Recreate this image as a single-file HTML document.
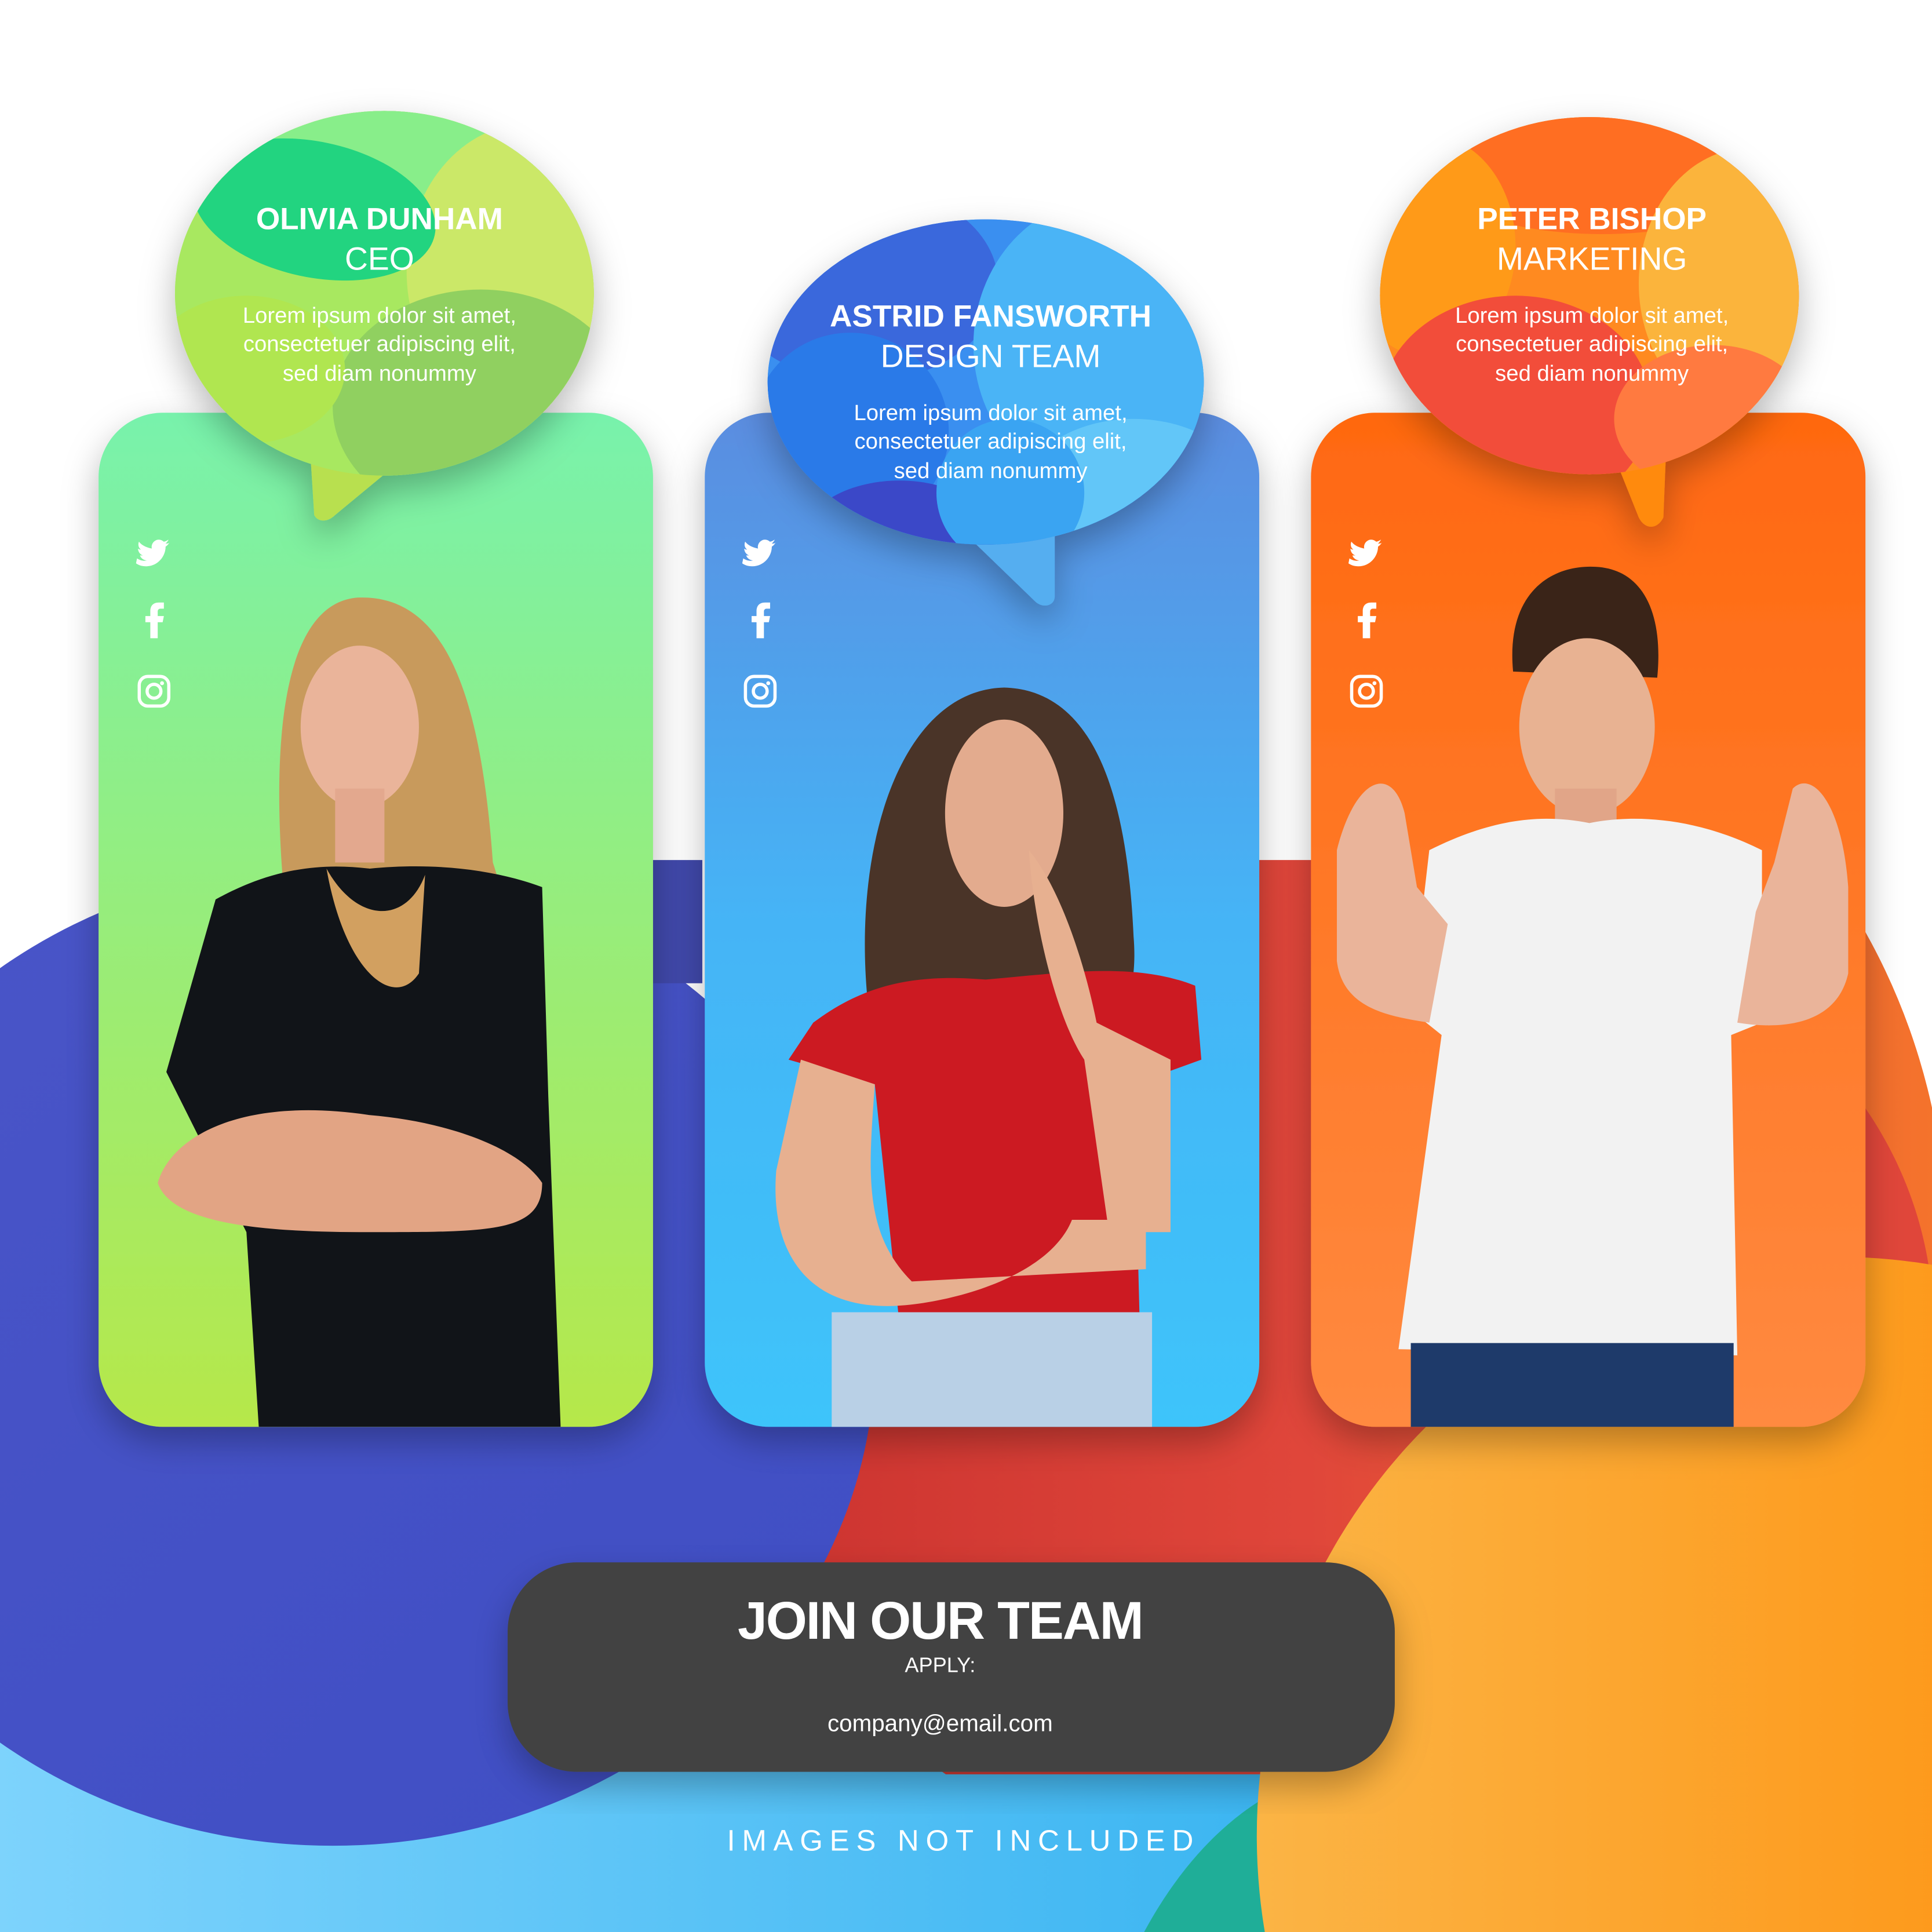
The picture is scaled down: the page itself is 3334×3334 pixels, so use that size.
<!DOCTYPE html>
<html><head><meta charset="utf-8">
<style>
html,body{margin:0;padding:0;background:#fff;width:3334px;height:3334px;overflow:hidden;}
svg{display:block;}
text{font-family:"Liberation Sans","DejaVu Sans",sans-serif;}
</style></head>
<body>
<svg width="3334" height="3334" viewBox="0 0 1568 1568" xmlns="http://www.w3.org/2000/svg">
<defs>
<linearGradient id="lb" x1="0" x2="1"><stop offset="0" stop-color="#7dd3fc"/><stop offset="1" stop-color="#1aa6ec"/></linearGradient>
<linearGradient id="red" x1="0" x2="1"><stop offset="0" stop-color="#c8302e"/><stop offset="0.5" stop-color="#e0463a"/><stop offset="1" stop-color="#f5742c"/></linearGradient>
<linearGradient id="blu" x1="0" x2="1" y1="0" y2="1"><stop offset="0" stop-color="#4a55c8"/><stop offset="1" stop-color="#3f4ec4"/></linearGradient>
<linearGradient id="org" x1="0" x2="1"><stop offset="0" stop-color="#fbb445"/><stop offset="1" stop-color="#ff8800"/></linearGradient>
<linearGradient id="cg" x1="0" x2="0" y1="0" y2="1"><stop offset="0" stop-color="#78f2ac"/><stop offset="1" stop-color="#b6e84a"/></linearGradient>
<linearGradient id="cb" x1="0" x2="0" y1="0" y2="1"><stop offset="0" stop-color="#5b8de0"/><stop offset="0.5" stop-color="#45b4f6"/><stop offset="1" stop-color="#3ec4fa"/></linearGradient>
<linearGradient id="co" x1="0" x2="0" y1="0" y2="1"><stop offset="0" stop-color="#ff6810"/><stop offset="1" stop-color="#ff8a40"/></linearGradient>
<filter id="sh" x="-20%" y="-20%" width="140%" height="140%"><feDropShadow dx="0" dy="12" stdDeviation="14" flood-color="#000" flood-opacity="0.28"/></filter>
<clipPath id="top698"><rect x="0" y="698" width="1568" height="742"/></clipPath>
<clipPath id="bg1"><ellipse cx="312" cy="238" rx="170" ry="148"/></clipPath>
<clipPath id="bb1"><ellipse cx="800" cy="310" rx="177" ry="132"/></clipPath>
<clipPath id="bo1"><ellipse cx="1290" cy="240" rx="170" ry="145"/></clipPath>
<clipPath id="k1"><rect x="80" y="335" width="450" height="823" rx="52"/></clipPath>
<clipPath id="k2"><rect x="572" y="335" width="450" height="823" rx="52"/></clipPath>
<clipPath id="k3"><rect x="1064" y="335" width="450" height="823" rx="52"/></clipPath>
<g id="icons" fill="#fff">
  <path d="M114,444c3,2 7,3 10,2c-3,0 -6,-2 -7,-5c1,0 2,0 3,0c-3,-1 -5,-4 -5,-7c1,1 2,1 3,1c-3,-2 -3,-6 -2,-8c3,4 8,6 13,7c-1,-5 3,-9 7,-9c2,0 4,1 5,2c2,0 3,-1 5,-2c-1,2 -2,3 -3,4c1,0 3,0 4,-1c-1,1 -2,3 -4,4c0,10 -8,20 -20,20c-4,0 -7,-1 -10,-3z" transform="translate(20,98) scale(0.8)"/>
  <path d="M122,518v-13h-4v-5h4v-4c0,-4 2,-7 7,-7h4v5h-3c-1,0 -2,1 -2,2v4h5l-1,5h-4v13z"/>
  <rect x="113" y="549" width="24" height="24" rx="7" fill="none" stroke="#fff" stroke-width="2.6"/>
  <circle cx="125" cy="561" r="5.6" fill="none" stroke="#fff" stroke-width="2.6"/>
  <circle cx="131.5" cy="554.5" r="1.6"/>
</g>
</defs>

<rect width="1568" height="1568" fill="#fff"/>
<rect x="0" y="1380" width="1568" height="188" fill="url(#lb)"/>
<g clip-path="url(#top698)"><circle cx="1060" cy="1010" r="520" fill="url(#red)"/></g>
<path d="M1400,800 C1500,850 1560,950 1568,1050 L1568,1300 L1300,1300 Z" fill="#e0463a"/>
<ellipse cx="1110" cy="1820" rx="240" ry="385" fill="#1fae98"/>
<circle cx="1490" cy="1490" r="470" fill="url(#org)"/>
<ellipse cx="270" cy="1100" rx="440" ry="398" fill="url(#blu)"/>
<rect x="440" y="698" width="130" height="100" fill="#4048aa"/>

<rect x="80" y="335" width="450" height="823" rx="52" fill="url(#cg)" filter="url(#sh)"/>
<rect x="572" y="335" width="450" height="823" rx="52" fill="url(#cb)" filter="url(#sh)"/>
<rect x="1064" y="335" width="450" height="823" rx="52" fill="url(#co)" filter="url(#sh)"/>

<g clip-path="url(#k1)">
  <path d="M230,720 C220,600 230,490 290,485 C360,482 390,560 400,700 C420,760 410,800 380,830 L240,830 Z" fill="#c89a5c"/>
  <ellipse cx="292" cy="590" rx="48" ry="66" fill="#eab49a"/>
  <rect x="272" y="640" width="40" height="60" fill="#e3a88e"/>
  <path d="M175,730 C220,705 260,700 300,705 C350,700 400,705 440,720 L445,890 L455,1158 L210,1158 L200,1000 L135,870 Z" fill="#111418"/>
  <path d="M128,960 C140,920 200,890 300,905 C360,910 420,930 440,960 C440,1000 400,1000 300,1000 C220,1000 140,995 128,960 Z" fill="#e2a484"/>
  <path d="M265,705 C290,750 330,750 345,710 L340,790 C320,820 280,790 265,705Z" fill="#d2a060"/>
</g>
<g clip-path="url(#k2)">
  <path d="M705,820 C690,690 730,560 815,558 C890,560 915,650 920,760 C925,820 900,850 870,850 L730,850 Z" fill="#4a3428"/>
  <ellipse cx="815" cy="660" rx="48" ry="76" fill="#e3ab8e"/>
  <path d="M660,830 C700,800 740,790 800,795 C860,790 920,780 970,800 L975,860 L920,880 L925,1075 L730,1075 L710,880 L640,860 Z" fill="#cc1a22"/>
  <path d="M650,860 L710,880 C705,950 700,1000 740,1040 L930,1030 L930,990 L870,990 C850,1040 760,1060 720,1060 C650,1060 625,1010 630,950 Z" fill="#e7b090"/>
  <path d="M835,690 C860,720 880,780 890,830 L950,860 L950,1000 L900,1000 L880,860 C860,830 840,760 835,690Z" fill="#e7b090"/>
  <rect x="675" y="1065" width="260" height="100" fill="#b9d0e6"/>
</g>
<g clip-path="url(#k3)">
  <path d="M1228,545 C1222,480 1260,458 1295,460 C1335,462 1350,500 1345,550 Z" fill="#3a2418"/>
  <ellipse cx="1288" cy="590" rx="55" ry="72" fill="#e8b292"/>
  <rect x="1262" y="640" width="50" height="45" fill="#e1a588"/>
  <path d="M1160,690 C1210,665 1250,660 1290,668 C1330,660 1380,665 1430,690 L1430,830 L1405,840 L1410,1100 L1135,1095 L1170,840 L1145,820 Z" fill="#f2f2f2"/>
  <path d="M1085,690 C1100,630 1130,620 1140,660 L1150,720 L1175,750 L1160,830 C1130,825 1090,820 1085,780 Z" fill="#eab49a"/>
  <path d="M1500,720 C1495,650 1470,625 1455,640 L1440,700 L1425,740 L1410,830 C1440,835 1490,835 1500,790 Z" fill="#eab49a"/>
  <rect x="1145" y="1090" width="262" height="80" fill="#1e3a6a"/>
</g>

<use href="#icons"/>
<use href="#icons" x="492"/>
<use href="#icons" x="984"/>

<g filter="url(#sh)">
  <path d="M252,370 L255,418 C258,424 266,424 272,418 L330,370 Z" fill="#b8e050"/>
  <ellipse cx="312" cy="238" rx="170" ry="148" fill="#a8e860"/>
</g>
<g clip-path="url(#bg1)">
  <rect x="130" y="80" width="360" height="320" fill="#a8e860"/>
  <ellipse cx="330" cy="120" rx="170" ry="90" fill="#88ee8a"/>
  <ellipse cx="430" cy="220" rx="100" ry="120" fill="#cbe868"/>
  <ellipse cx="255" cy="170" rx="100" ry="55" transform="rotate(12 255 170)" fill="#22d480"/>
  <ellipse cx="390" cy="330" rx="120" ry="95" fill="#90d060"/>
  <ellipse cx="200" cy="300" rx="80" ry="60" fill="#b0e650"/>
</g>
<g filter="url(#sh)">
  <path d="M780,430 L840,488 C846,494 856,492 856,484 L856,430 Z" fill="#55aef0"/>
  <ellipse cx="800" cy="310" rx="177" ry="132" fill="#3a8ff0"/>
</g>
<g clip-path="url(#bb1)">
  <rect x="620" y="170" width="360" height="280" fill="#3a8ff0"/>
  <ellipse cx="700" cy="230" rx="110" ry="80" fill="#3a68dc"/>
  <ellipse cx="900" cy="280" rx="110" ry="120" fill="#4ab4f6"/>
  <ellipse cx="690" cy="350" rx="80" ry="80" fill="#2a7ae8"/>
  <ellipse cx="730" cy="440" rx="80" ry="50" fill="#3b48c8"/>
  <ellipse cx="920" cy="400" rx="90" ry="60" fill="#62c6f8"/>
  <ellipse cx="820" cy="400" rx="60" ry="60" fill="#3aa4f2"/>
</g>
<g filter="url(#sh)">
  <path d="M1310,370 L1330,420 C1335,430 1345,430 1350,420 L1352,370 Z" fill="#ff8a10"/>
  <ellipse cx="1290" cy="240" rx="170" ry="145" fill="#ff8a20"/>
</g>
<g clip-path="url(#bo1)">
  <rect x="1110" y="90" width="360" height="300" fill="#ff8a20"/>
  <ellipse cx="1300" cy="120" rx="160" ry="70" fill="#ff6e22"/>
  <ellipse cx="1420" cy="230" rx="90" ry="110" fill="#fbb43c"/>
  <ellipse cx="1160" cy="200" rx="70" ry="90" fill="#ff9a18"/>
  <ellipse cx="1230" cy="330" rx="110" ry="90" fill="#f24d3a"/>
  <ellipse cx="1390" cy="340" rx="80" ry="60" fill="#ff7a40"/>
</g>

<g fill="#fff" text-anchor="middle">
  <text x="308" y="186" font-size="25" font-weight="bold">OLIVIA DUNHAM</text>
  <text x="308" y="219" font-size="26">CEO</text>
  <text x="308" y="262" font-size="18">Lorem ipsum dolor sit amet,</text>
  <text x="308" y="285" font-size="18">consectetuer adipiscing elit,</text>
  <text x="308" y="309" font-size="18">sed diam nonummy</text>

  <text x="804" y="265" font-size="25" font-weight="bold">ASTRID FANSWORTH</text>
  <text x="804" y="298" font-size="26">DESIGN TEAM</text>
  <text x="804" y="341" font-size="18">Lorem ipsum dolor sit amet,</text>
  <text x="804" y="364" font-size="18">consectetuer adipiscing elit,</text>
  <text x="804" y="388" font-size="18">sed diam nonummy</text>

  <text x="1292" y="186" font-size="25" font-weight="bold">PETER BISHOP</text>
  <text x="1292" y="219" font-size="26">MARKETING</text>
  <text x="1292" y="262" font-size="18">Lorem ipsum dolor sit amet,</text>
  <text x="1292" y="285" font-size="18">consectetuer adipiscing elit,</text>
  <text x="1292" y="309" font-size="18">sed diam nonummy</text>
</g>

<rect x="412" y="1268" width="720" height="170" rx="56" fill="#434243" filter="url(#sh)"/>
<g fill="#fff" text-anchor="middle">
  <text x="763" y="1330" font-size="43" font-weight="bold" letter-spacing="-1">JOIN OUR TEAM</text>
  <text x="763" y="1357" font-size="17">APPLY:</text>
  <text x="763" y="1405" font-size="19">company@email.com</text>
  <text x="782" y="1502" font-size="24" letter-spacing="5.5">IMAGES NOT INCLUDED</text>
</g>
</svg>
</body></html>
